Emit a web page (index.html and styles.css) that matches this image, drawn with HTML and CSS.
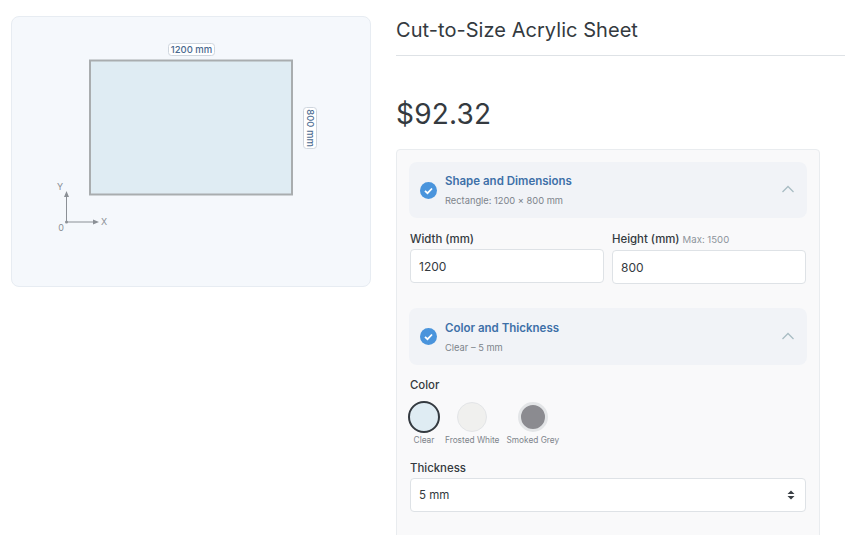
FILE: index.html
```html
<!DOCTYPE html>
<html>
<head>
    <title>Cut-to-Size Acrylic Sheet</title>
    <link rel="stylesheet" href="styles.css">
</head>
<body>
    <div class="page">
        <div class="preview">
            <svg class="preview-svg" width="358" height="269" viewBox="0 0 358 269">
                <rect x="78" y="43.500" width="202" height="134" fill="#dfecf3" stroke="#a9adaf" stroke-width="2"/>
                <rect x="156.500" y="26.500" width="46" height="12" rx="3" fill="#fff" stroke="#cfd6de"/>
                <text x="179.500" y="36" class="dim" text-anchor="middle">1200 mm</text>
                <g transform="translate(298 111) rotate(90)">
                    <rect x="-20.500" y="-6.500" width="41" height="13" rx="3" fill="#fff" stroke="#cfd6de"/>
                    <text x="0" y="3.500" class="dim" text-anchor="middle">800 mm</text>
                </g>
                <path d="M54.500 205V177M54.500 205H82" stroke="#8b9096" stroke-width="1" fill="none"/>
                <path d="M54.500 174l-2.500 6h5zM87 205l-6-2.500v5z" fill="#8b9096"/>
                <circle cx="54.500" cy="205" r="1.500" fill="#8b9096"/>
                <text x="48" y="173" class="axis" text-anchor="middle">Y</text>
                <text x="92" y="208" class="axis" text-anchor="middle">X</text>
                <text x="49" y="214" class="axis" text-anchor="middle">0</text>
            </svg>
        </div>

        <div class="details">
            <h1 class="title">Cut-to-Size Acrylic Sheet</h1>
            <div class="price">$92.32</div>

            <div class="options">
                <div class="step">
                    <svg class="check" width="17" height="17" viewBox="0 0 17 17">
                        <circle cx="8.500" cy="8.500" r="8.500" fill="#4a94dc"/>
                        <path d="M5 8.800l2.500 2.400L12 6.500" fill="none" stroke="#fff" stroke-width="1.800"/>
                    </svg>
                    <div class="step-text">
                        <div class="step-title">Shape and Dimensions</div>
                        <div class="step-sub">Rectangle: 1200 × 800 mm</div>
                    </div>
                    <svg class="chevron" width="14" height="8" viewBox="0 0 14 8">
                        <path d="M1.500 7L7 1.500L12.500 7" fill="none" stroke="#a9bcc4" stroke-width="1.300"/>
                    </svg>
                </div>

                <div class="fields">
                    <div class="field">
                        <label>Width (mm)</label>
                        <input type="text" value="1200">
                    </div>
                    <div class="field">
                        <label>Height (mm) <span class="hint">Max: 1500</span></label>
                        <input type="text" value="800">
                    </div>
                </div>

                <div class="step">
                    <svg class="check" width="17" height="17" viewBox="0 0 17 17">
                        <circle cx="8.500" cy="8.500" r="8.500" fill="#4a94dc"/>
                        <path d="M5 8.800l2.500 2.400L12 6.500" fill="none" stroke="#fff" stroke-width="1.800"/>
                    </svg>
                    <div class="step-text">
                        <div class="step-title">Color and Thickness</div>
                        <div class="step-sub">Clear – 5 mm</div>
                    </div>
                    <svg class="chevron" width="14" height="8" viewBox="0 0 14 8">
                        <path d="M1.500 7L7 1.500L12.500 7" fill="none" stroke="#a9bcc4" stroke-width="1.300"/>
                    </svg>
                </div>

                <div class="color-block">
                    <label>Color</label>
                    <div class="swatches">
                        <div class="swatch selected">
                            <span class="dot clear"></span>
                            <span class="swatch-name">Clear</span>
                        </div>
                        <div class="swatch">
                            <span class="dot frosted"></span>
                            <span class="swatch-name">Frosted White</span>
                        </div>
                        <div class="swatch">
                            <span class="dot smoked"></span>
                            <span class="swatch-name">Smoked Grey</span>
                        </div>
                    </div>
                </div>

                <div class="thickness">
                    <label>Thickness</label>
                    <div class="select-box">
                        <span>5 mm</span>
                        <svg width="8" height="10" viewBox="0 0 8 10">
                            <path d="M4 .5L7.500 4H.5zM4 9.500L.5 6h7z" fill="#3a3f45"/>
                        </svg>
                    </div>
                </div>
            </div>
        </div>
    </div>
</body>
</html>
```

FILE: styles.css
```css
html, body {
    margin: 0;
    background: #fff;
}

body {
    font-family: Inter, "Liberation Sans", sans-serif;
    color: #343a40;
}

.page {
    display: flex;
    align-items: flex-start;
    gap: 25px;
    height: 535px;
    box-sizing: border-box;
    padding: 16px 0 0 11px;
    overflow: hidden;
}

.preview {
    flex: 0 0 auto;
    width: 358px;
    height: 269px;
    background: #f5f8fc;
    border: 1px solid #e7ecf2;
    border-radius: 8px;
}

.preview-svg {
    display: block;
}

.dim {
    font-family: Inter, sans-serif;
    font-size: 9.500px;
    font-weight: 500;
    fill: #4a6a90;
}

.axis {
    font-family: Inter, sans-serif;
    font-size: 9px;
    fill: #8b9096;
}

.details {
    flex: 1;
    min-width: 0;
    margin-top: -16px;
}

.title {
    margin: 0;
    padding: 18px 0 12px;
    font-size: 20px;
    font-weight: 400;
    line-height: 25px;
    letter-spacing: 0.050px;
    border-bottom: 1px solid #dee2e6;
}

.price {
    margin-top: 40px;
    font-size: 28px;
    line-height: 36px;
    letter-spacing: 0.200px;
}

.options {
    width: 398px;
    margin-top: 17px;
    padding: 12px 12px 80px;
    background: #f9f9fa;
    border: 1px solid #e9ecef;
    border-radius: 4px;
}

.step {
    display: flex;
    align-items: center;
    height: 56px;
    padding: 0 12px 0 11px;
    box-sizing: border-box;
    background: #f1f3f7;
    border-radius: 8px;
}

.fields + .step {
    height: 57px;
}

.step-text {
    flex: 1;
    margin-top: -1px;
    margin-left: 8px;
}

.fields + .step .step-text {
    margin-top: 1px;
}

.step-title {
    font-size: 11.500px;
    font-weight: 600;
    line-height: 16px;
    color: #3e70a8;
}

.step-sub {
    margin-top: 6px;
    font-size: 9.300px;
    line-height: 12px;
    color: #7d848b;
}

.chevron {
    margin-top: -2px;
}

label {
    display: block;
    font-size: 11.400px;
    font-weight: 500;
    line-height: 14px;
}

.hint {
    font-size: 9.600px;
    font-weight: 400;
    color: #8d949a;
}

.fields {
    display: flex;
    gap: 8px;
    margin: 14px 1px 24px;
}

.field {
    flex: 1;
}

.field label {
    margin-bottom: 3px;
}

.field input {
    display: block;
    width: 100%;
    height: 34px;
    box-sizing: border-box;
    padding: 0 8px;
    font-family: Inter, sans-serif;
    font-size: 12px;
    color: #343a40;
    background: #fff;
    border: 1px solid #dee2e6;
    border-radius: 4px;
}

.color-block {
    margin: 13px 1px 0;
}

.swatches {
    display: flex;
    gap: 7px;
    margin-top: 9px;
    margin-left: -2px;
}

.swatch {
    display: flex;
    flex-direction: column;
    align-items: center;
}

.dot {
    box-sizing: border-box;
    border-radius: 50%;
    border: 1px solid #e3e5e7;
}

.clear {
    width: 32px;
    height: 32px;
    background: #dfecf3;
    border: 2px solid #343a40;
}

.frosted {
    width: 30px;
    height: 30px;
    margin: 1px;
    background: #f0f0ee;
}

.smoked {
    width: 30px;
    height: 30px;
    margin: 1px;
    background: #8b8b90;
    border: 3px solid #e3e5e7;
}

.swatch-name {
    margin-top: 2px;
    font-size: 8.300px;
    line-height: 11px;
    color: #7d848b;
    white-space: nowrap;
}

.selected {
    margin-right: -2px;
}

.thickness {
    margin: 15px 1px 0;
}

.thickness label {
    margin-bottom: 3px;
}

.select-box {
    display: flex;
    align-items: center;
    justify-content: space-between;
    height: 34px;
    box-sizing: border-box;
    padding: 0 10px 0 8px;
    font-size: 11.500px;
    background: #fff;
    border: 1px solid #dee2e6;
    border-radius: 4px;
}
```
